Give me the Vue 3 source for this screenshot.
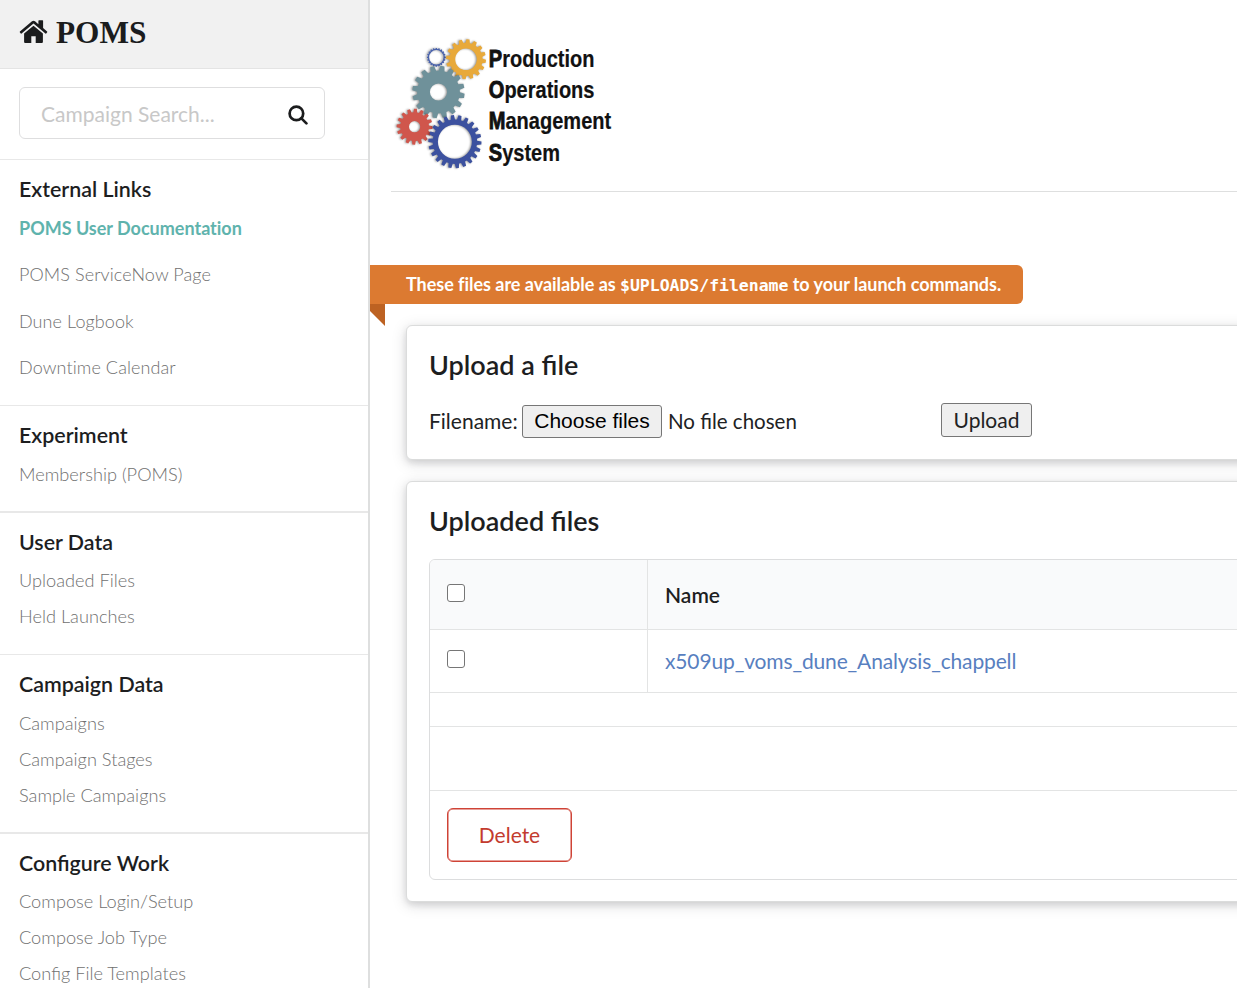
<script setup>
const sections = [
  { title: 'External Links', cls: 'external', links: ['POMS User Documentation', 'POMS ServiceNow Page', 'Dune Logbook', 'Downtime Calendar'] },
  { title: 'Experiment', cls: 'experiment', links: ['Membership (POMS)'] },
  { title: 'User Data', cls: 'user', links: ['Uploaded Files', 'Held Launches'] },
  { title: 'Campaign Data', cls: 'campaign', links: ['Campaigns', 'Campaign Stages', 'Sample Campaigns'] },
  { title: 'Configure Work', cls: 'configure', links: ['Compose Login/Setup', 'Compose Job Type', 'Config File Templates'] },
]

// Toothed ring: outer outline followed by a round hole (even-odd fill).
function gear(cx, cy, outer, inner, hole, teeth, phase = 0) {
  const pts = []
  const step = (Math.PI * 2) / teeth
  for (let i = 0; i < teeth; i++) {
    const a = i * step + phase
    for (const [t, r] of [[-0.34, inner], [-0.2, outer], [0.2, outer], [0.34, inner]]) {
      pts.push(`${(cx + r * Math.cos(a + t * step)).toFixed(2)} ${(cy + r * Math.sin(a + t * step)).toFixed(2)}`)
    }
  }
  return `M${pts.join('L')}ZM${cx - hole} ${cy}a${hole} ${hole} 0 1 0 ${hole * 2} 0a${hole} ${hole} 0 1 0 ${-hole * 2} 0Z`
}

const gears = [
  { color: '#4a63ad', d: gear(51.3, 32.3, 9.4, 8.4, 7.2, 20) },
  { color: '#e8a93a', d: gear(81, 34.3, 20, 16.6, 10.8, 16, 0.1) },
  { color: '#6f919a', d: gear(53.5, 67, 26.2, 21.4, 8.6, 16, 0.15) },
  { color: '#d0564c', d: gear(29.6, 101.7, 18, 14.4, 5.6, 16, 0.05) },
  { color: '#3c519f', d: gear(69.9, 116.7, 26.6, 22.2, 17, 22, 0.05) },
]

const words = [
  { text: 'Production', y: 42 },
  { text: 'Operations', y: 73 },
  { text: 'Management', y: 104.3 },
  { text: 'System', y: 135.6 },
]
</script>

<template>
  <div class="page">
    <aside class="sidebar">
      <div class="brand">
        <svg class="home" viewBox="0 0 28 24">
          <path d="M14 5.7 23.4 13.4V22a1.1 1.1 0 0 1-1.1 1.1H16.2V16.2H11.8v6.9H5.7A1.1 1.1 0 0 1 4.6 22v-8.6Z" />
          <path d="m27.6 11.4-4-3.3V.8a.6.6 0 0 0-.6-.6h-3.5a.6.6 0 0 0-.6.6v3.5L15.5 1.3a2.5 2.5 0 0 0-3 0L.4 11.4a.6.6 0 0 0-.1.8l1 1.2a.6.6 0 0 0 .8.1L14 3.6l11.9 9.9a.6.6 0 0 0 .8-.1l1-1.2a.6.6 0 0 0-.1-.8Z" />
        </svg>
        <span>POMS</span>
      </div>
      <div class="search-row">
        <div class="search">
          <span>Campaign Search...</span>
          <svg viewBox="0 0 20 20"><circle cx="8.4" cy="8.4" r="6.8" /><path d="m13.4 13.4 5 5" /></svg>
        </div>
      </div>
      <nav v-for="s in sections" :key="s.title" class="section" :class="s.cls">
        <h4>{{ s.title }}</h4>
        <a v-for="l in s.links" :key="l">{{ l }}</a>
      </nav>
    </aside>

    <main>
      <header>
        <svg class="logo" width="240" height="155" viewBox="0 0 240 155">
          <path v-for="g in gears" :key="g.color" class="gear" :d="g.d" :fill="g.color" fill-rule="evenodd" />
          <text v-for="w in words" :key="w.text" :transform="`translate(103.8 ${w.y}) scale(0.852 1)`"><tspan class="initial">{{ w.text[0] }}</tspan>{{ w.text.slice(1) }}</text>
        </svg>
      </header>

      <div class="ribbon-row">
        <div class="ribbon">These files are available as <code>$UPLOADS/filename</code> to your launch commands.</div>
        <div class="fold"></div>
      </div>

      <section class="segment upload">
        <h3>Upload a file</h3>
        <div class="form">
          <span class="label">Filename:</span>
          <button class="choose">Choose files</button>
          <span class="none">No file chosen</span>
          <button class="send">Upload</button>
        </div>
      </section>

      <section class="segment files">
        <h3>Uploaded files</h3>
        <div class="table">
          <div class="row head"><div class="check"><input type="checkbox"></div><div class="name">Name</div></div>
          <div class="row item"><div class="check"><input type="checkbox"></div><div class="name"><a>x509up_voms_dune_Analysis_chappell</a></div></div>
          <div class="row thin"></div>
          <div class="row blank"></div>
          <div class="row actions"><button class="delete">Delete</button></div>
        </div>
      </section>
    </main>
  </div>
</template>

<style>
body { margin: 0; overflow: hidden; }
</style>

<style scoped>
* { box-sizing: border-box; }
.page { display: flex; width: 1237px; height: 988px; overflow: hidden; background: #fff; color: #212223; font: 400 21px/30px Lato, sans-serif; }
.sidebar { flex: none; width: 370px; height: 988px; overflow: hidden; border-right: 2px solid #dedfdf; }
.brand { display: flex; align-items: center; height: 69px; padding: 0 0 4px 19px; background: #f1f1f1; border-bottom: 1px solid #e4e4e4; color: #1b1c1d; font: 700 31.3px/36px "Liberation Serif", serif; }
.brand span { padding-top: 2px; }
.home { width: 29px; height: 24px; margin-right: 8px; fill: #1b1c1d; }
.search-row { height: 91px; padding: 18px 0 0 19px; border-bottom: 1px solid #e8e8e8; }
.search { display: flex; align-items: center; justify-content: space-between; width: 306px; height: 52px; padding: 0 16px 0 21px; border: 1px solid #dededf; border-radius: 6px; color: #c8c8c8; }
.search span { padding-top: 2px; }
.search svg { width: 20px; height: 20px; margin-top: 3px; fill: none; stroke: #1b1c1d; stroke-width: 2.7; stroke-linecap: round; }
.section { padding: 14px 19px 0; border-bottom: 1px solid #e8e8e8; }
.section h4 { margin: 0 0 6px; font: 600 21.4px/30px Lato, sans-serif; color: #1d1e1f; }
.section a { display: block; color: #707070; font-weight: 300; font-size: 18.2px; line-height: 36px; }
.external { height: 246px; }
.external h4 { margin-bottom: 0.5px; }
.external a { font-size: 18px; line-height: 46.5px; letter-spacing: 0.1px; }
.external a:first-of-type { color: #5fb3ad; font-weight: 700; letter-spacing: -0.01px; }
.experiment { height: 107px; border-bottom-width: 2px; }
.user { height: 142px; }
.user h4, .configure h4 { margin-bottom: 5px; }
.campaign { height: 179px; border-bottom-width: 2px; }
.configure { height: 200px; }
main { flex: 1; min-width: 0; }
header { height: 192px; margin-left: 21px; border-bottom: 1px solid #dedfdf; }
.logo { display: block; margin-left: -6px; transform: translateY(25px); }
.gear { filter: drop-shadow(-0.5px 0.8px 1px rgba(0, 0, 0, 0.45)); }
.logo text { font: 700 23.5px "Liberation Sans", sans-serif; fill: #111; stroke: #111; stroke-width: 0.2px; }
.logo .initial { stroke-width: 0.9px; }
.ribbon-row { height: 133px; padding-top: 73px; }
.ribbon { width: 653px; height: 39px; padding-left: 36px; border-radius: 0 6px 6px 0; background: #dc7a31; color: #fff; font-weight: 700; font-size: 18px; line-height: 39px; white-space: nowrap; letter-spacing: -0.03px; }
.ribbon code { font: 700 16.5px "DejaVu Sans Mono", monospace; }
.fold { width: 15px; height: 22px; background: #bd6222; clip-path: polygon(0 0, 100% 0, 100% 100%, 0 7px); }
.segment { width: 1000px; margin-left: 36px; padding: 19px 22px; border: 1px solid #dbdcdc; border-radius: 6px; box-shadow: 0 3px 6px rgba(34, 36, 38, 0.12), 0 3px 15px rgba(34, 36, 38, 0.15); background: #fff; }
.segment h3 { margin: 0; font: 600 27px/39px Lato, sans-serif; color: #1d1e1f; }
.upload { height: 135px; }
.files { height: 421px; margin-top: 21px; }
.form { display: flex; align-items: flex-start; height: 38px; margin-top: 19px; }
.label { width: 93px; padding-top: 3px; }
.form button { padding: 0; border: 1px solid #767676; border-radius: 3px; background: #efefef; }
.choose { width: 140px; height: 33px; margin-top: 2px; color: #000; font: 21px/28px "Liberation Sans", Arial, sans-serif; }
.form .choose { padding-bottom: 2px; }
.none { width: 279px; padding: 3px 0 0 6px; font-size: 20.5px; }
.send { width: 91px; height: 34px; color: #212223; font: 21px/30px Lato, sans-serif; }
.table { height: 321px; margin-top: 19px; border: 1px solid #dcddde; border-radius: 6px; overflow: hidden; }
.row { display: flex; border-bottom: 1px solid #e3e4e4; }
.head { height: 70px; background: #f9fafb; font-weight: 600; color: #1d1e1f; }
.item { height: 63px; }
.thin { height: 34px; }
.blank { height: 64px; }
.actions { height: 88px; padding: 17px; border-bottom: 0; }
.check { width: 218px; padding: 24px 0 0 17px; border-right: 1px solid #e3e4e4; }
.item .check { padding-top: 20px; }
.name { padding: 20px 0 0 17px; }
.item .name { padding-top: 16px; letter-spacing: -0.14px; }
.name a { color: #587fc0; }
input { display: block; appearance: none; width: 18px; height: 18px; margin: 0; border: 1.5px solid #767676; border-radius: 3px; background: #fff; }
.delete { width: 125px; height: 54px; padding: 0; border: 1px solid #cf4336; border-radius: 6px; box-shadow: inset 0 0 0 0.5px #cf4336; background: #fff; color: #c33b2e; font: 400 21px/50px Lato, sans-serif; }
</style>
